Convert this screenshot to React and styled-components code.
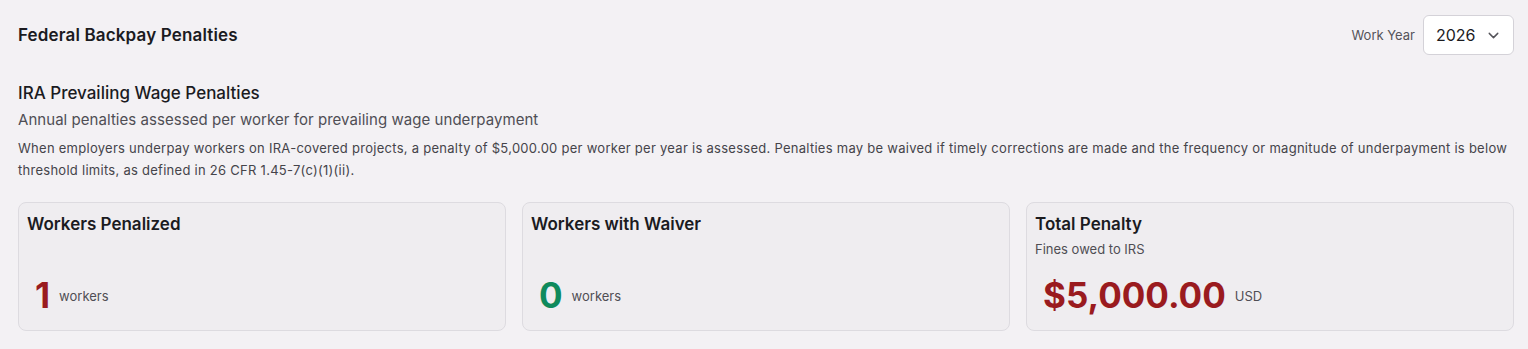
import React from "react";
import styled, { createGlobalStyle } from "styled-components";

const GlobalStyle = createGlobalStyle`
  body {
    margin: 0;
    background: #f3f1f4;
    font-family: Inter, "Noto Sans", sans-serif;
    color: #1b1b1f;
  }
`;

const cards = [
  { title: "Workers Penalized", value: "1", unit: "workers", tone: "red" },
  { title: "Workers with Waiver", value: "0", unit: "workers", tone: "green" },
  { title: "Total Penalty", sub: "Fines owed to IRS", value: "$5,000.00", unit: "USD", tone: "red" },
];

function ChevronDown() {
  return (
    <svg width="17" height="17" viewBox="0 0 24 24" fill="none" stroke="#55545a" strokeWidth="2" strokeLinecap="round" strokeLinejoin="round">
      <path d="m6 9 6 6 6-6" />
    </svg>
  );
}

export default function App() {
  return (
    <>
      <GlobalStyle />
      <Page>
        <Header>
          <PageTitle>Federal Backpay Penalties</PageTitle>
          <YearPicker>
            <YearLabel>Work Year</YearLabel>
            <Select>
              <span>2026</span>
              <ChevronDown />
            </Select>
          </YearPicker>
        </Header>

        <Section>
          <SectionTitle>IRA Prevailing Wage Penalties</SectionTitle>
          <SectionSub>Annual penalties assessed per worker for prevailing wage underpayment</SectionSub>
          <Description>
            When employers underpay workers on IRA-covered projects, a penalty of $5,000.00 per worker per year is assessed. Penalties may be waived if timely corrections are made and the frequency or magnitude of underpayment is below threshold limits, as defined in 26 CFR 1.45-7(c)(1)(ii).
          </Description>
        </Section>

        <CardGrid>
          {cards.map((c) => (
            <Card key={c.title}>
              <CardTitle>{c.title}</CardTitle>
              {c.sub && <CardSub>{c.sub}</CardSub>}
              <ValueRow>
                <BigValue tone={c.tone}>{c.value}</BigValue>
                <Unit>{c.unit}</Unit>
              </ValueRow>
            </Card>
          ))}
        </CardGrid>
      </Page>
    </>
  );
}

const Page = styled.div`
  padding: 15px 14px 18px 18px;
`;

const Header = styled.div`
  display: flex;
  align-items: center;
  justify-content: space-between;
  height: 40px;
`;

const PageTitle = styled.h1`
  margin: 0;
  font-size: 17px;
  font-weight: 600;
  letter-spacing: 0.15px;
`;

const YearPicker = styled.div`
  display: flex;
  align-items: center;
  gap: 8px;
`;

const YearLabel = styled.span`
  font-size: 13px;
  color: #55545a;
`;

const Select = styled.div`
  box-sizing: border-box;
  width: 91px;
  height: 40px;
  display: flex;
  align-items: center;
  justify-content: space-between;
  padding: 0 11px 0 12px;
  background: #fff;
  border: 1px solid #d4d2d8;
  border-radius: 6px;
  font-size: 16px;
  color: #1b1b1f;
`;

const Section = styled.div`
  margin-top: 26px;
`;

const SectionTitle = styled.h2`
  margin: 0;
  font-size: 17px;
  font-weight: 500;
  line-height: 24px;
`;

const SectionSub = styled.p`
  margin: 4px 0 0;
  font-size: 15px;
  line-height: 22px;
  color: #4f4e54;
  letter-spacing: 0.05px;
`;

const Description = styled.p`
  margin: 6px 0 0;
  font-size: 13px;
  line-height: 22px;
  color: #45444a;
  letter-spacing: 0.27px;
`;

const CardGrid = styled.div`
  display: grid;
  grid-template-columns: repeat(3, 1fr);
  gap: 16px;
  margin-top: 21px;
`;

const Card = styled.div`
  box-sizing: border-box;
  height: 129px;
  display: flex;
  flex-direction: column;
  padding: 9px 8px 13px;
  background: #efedf0;
  border: 1px solid #dddbe0;
  border-radius: 8px;
`;

const CardTitle = styled.h3`
  margin: 0;
  font-size: 17px;
  font-weight: 600;
  line-height: 24px;
`;

const CardSub = styled.div`
  margin-top: 3px;
  font-size: 13px;
  line-height: 20px;
  color: #4f4e54;
`;

const ValueRow = styled.div`
  margin-top: auto;
  display: flex;
  align-items: center;
  gap: 9px;
  padding-left: 8px;
  height: 44px;
`;

const BigValue = styled.span`
  font-size: 35px;
  font-weight: 700;
  color: ${(p) => (p.tone === "green" ? "#0f8a5c" : "#9a1b1f")};
`;

const Unit = styled.span`
  font-size: 13px;
  color: #4f4e54;
  margin-top: 2px;
`;
